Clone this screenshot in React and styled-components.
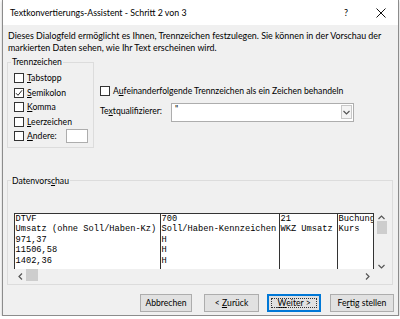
import React from 'react';
import styled, { createGlobalStyle } from 'styled-components';

const GlobalStyle = createGlobalStyle`
  body {
    margin: 0;
    background: #ffffff;
    font-family: Lato, "Noto Sans", sans-serif;
    font-size: 8.6px;
    color: #000;
  }
  * { box-sizing: border-box; }
`;

const Window = styled.div`
  margin-left: 2px;
  width: 397px;
  height: 316px;
  background: #f0f0f0;
  border: 1px solid #8c8c8c;
  border-top: none;
  box-shadow: 0 1px 3px rgba(0, 0, 0, 0.25);
  display: flex;
  flex-direction: column;
  overflow: hidden;
`;

const TitleBar = styled.div`
  height: 25px;
  flex: none;
  background: #ffffff;
  display: flex;
  align-items: center;
  padding-left: 7px;
`;

const Title = styled.div`
  flex: 1;
  font-size: 8.8px;
`;

const TitleButton = styled.div`
  width: ${p => p.$w}px;
  height: 25px;
  display: flex;
  align-items: center;
  justify-content: center;
  font-size: 9px;
`;

const Body = styled.div`
  flex: 1;
  padding: 5px 4px 0 4px;
  display: flex;
  flex-direction: column;
`;

const Intro = styled.p`
  margin: 0;
  padding-left: 1px;
  font-size: 8.9px;
  line-height: 12px;
  white-space: nowrap;
`;

const TopRow = styled.div`
  display: flex;
  margin-top: 2px;
`;

const Group = styled.fieldset`
  margin: 0;
  min-width: 0;
  width: ${p => p.$w}px;
  border: 1px solid #dcdcdc;
  padding: ${p => p.$pad};
`;

const Legend = styled.legend`
  padding: 0 1px;
  margin-left: ${p => p.$ml}px;
  line-height: 12px;
`;

const OptionRow = styled.label`
  display: flex;
  align-items: center;
  height: 14.5px;
  white-space: nowrap;
`;

const Box = styled.span`
  width: 10px;
  height: 10px;
  border: 1px solid #333;
  background: #fff;
  display: flex;
  align-items: center;
  justify-content: center;
  flex: none;
`;

const OptionText = styled.span`
  margin-left: 3px;
`;

const SmallInput = styled.span`
  width: 22px;
  height: 14px;
  border: 1px solid #adadad;
  background: #fff;
  margin-left: 9px;
`;

const RightPanel = styled.div`
  margin-left: 6px;
  padding-top: 28px;
  display: flex;
  flex-direction: column;
`;

const QualifierRow = styled.div`
  display: flex;
  align-items: center;
  margin-top: 4px;
`;

const QualifierLabel = styled.span`
  width: 71px;
  margin-top: -3px;
`;

const Select = styled.div`
  width: 183px;
  height: 19px;
  background: #fff;
  border: 1px solid #adadad;
  display: flex;
  align-items: center;
  justify-content: space-between;
  padding: 0 1px 0 3px;
`;

const SelectValue = styled.span`
  align-self: flex-start;
  line-height: 10px;
`;

const SelectArrow = styled.span`
  width: 11px;
  height: 14px;
  border: 1px solid #c8c8c8;
  background: #f4f4f4;
  display: flex;
  align-items: center;
  justify-content: center;
`;

const PreviewGroup = styled(Group)`
  margin-top: 27px;
`;

const Preview = styled.div`
  display: grid;
  grid-template-columns: 360px 14px;
  grid-template-rows: 56px 15px;
`;

const DataArea = styled.div`
  background: #fff;
  border-top: 1px solid #333;
  display: flex;
  overflow: hidden;
`;

const Column = styled.div`
  width: ${p => p.$w}px;
  flex: none;
  border-left: 1px solid #333;
  border-right: ${p => (p.$last ? '1px solid #333' : 'none')};
  font-family: "Liberation Mono", "Courier New", monospace;
  font-size: 8.7px;
  line-height: 10.6px;
  white-space: pre;
  overflow: hidden;
  padding-left: 0.5px;
`;

const VScroll = styled.div`
  display: flex;
  flex-direction: column;
  align-items: center;
  padding: 2px 0 0 1px;
`;

const VThumb = styled.div`
  width: 10px;
  height: 13px;
  background: #cdcdcd;
  margin-top: 1px;
`;

const HScroll = styled.div`
  display: flex;
  align-items: center;
  padding-left: 4px;
  height: 15px;
`;

const HThumb = styled.div`
  width: 12px;
  height: 12px;
  background: #cdcdcd;
  margin-left: 3px;
  align-self: flex-start;
`;

const Spacer = styled.div`
  flex: 1;
`;

const EndGap = styled.div`
  width: 4px;
`;

const ButtonRow = styled.div`
  display: flex;
  justify-content: flex-end;
  margin-top: 9px;
`;

const Button = styled.div`
  width: ${p => p.$w}px;
  margin-left: ${p => p.$ml}px;
  height: 18px;
  background: #e1e1e1;
  border: 1px solid ${p => (p.$default ? '#0078d7' : '#adadad')};
  box-shadow: ${p => (p.$default ? 'inset 0 0 0 1px #0078d7' : 'none')};
  display: flex;
  align-items: center;
  justify-content: center;
  white-space: pre;
  position: relative;
  &::after {
    content: '';
    display: ${p => (p.$default ? 'block' : 'none')};
    position: absolute;
    inset: 3px;
    border: 1px dotted #333;
  }
`;

const Check = () => (
  <svg width="8" height="8" viewBox="0 0 8 8">
    <path d="M1 4.2 L3 6.3 L7 1.3" fill="none" stroke="#222" strokeWidth="1" />
  </svg>
);

const Chevron = ({ dir }) => {
  const d = {
    up: 'M0.5 4 L3.5 1 L6.5 4',
    down: 'M0.5 1 L3.5 4 L6.5 1',
    left: 'M4 0.5 L1 3.5 L4 6.5',
    right: 'M1 0.5 L4 3.5 L1 6.5',
  }[dir];
  const vertical = dir === 'up' || dir === 'down';
  return (
    <svg width={vertical ? 7 : 5} height={vertical ? 5 : 7} viewBox={vertical ? '0 0 7 5' : '0 0 5 7'}>
      <path d={d} fill="none" stroke="#555" strokeWidth="1.2" />
    </svg>
  );
};

const CheckOption = ({ checked, children }) => (
  <OptionRow>
    <Box>{checked && <Check />}</Box>
    <OptionText>{children}</OptionText>
  </OptionRow>
);

const columns = [
  { w: 146, text: 'DTVF\nUmsatz (ohne Soll/Haben-Kz)\n971,37\n11506,58\n1402,36' },
  { w: 119, text: '700\nSoll/Haben-Kennzeichen\nH\nH\nH' },
  { w: 58, text: '21\nWKZ Umsatz' },
  { w: 37, text: 'Buchung\nKurs', last: true },
];

export default function App() {
  return (
    <>
      <GlobalStyle />
      <Window>
        <TitleBar>
          <Title>Textkonvertierungs-Assistent - Schritt 2 von 3</Title>
          <TitleButton $w={34}>?</TitleButton>
          <TitleButton $w={35}>
            <svg width="10" height="10" viewBox="0 0 10 10">
              <path d="M0.5 0.5 L9.5 9.5 M9.5 0.5 L0.5 9.5" stroke="#111" strokeWidth="1" />
            </svg>
          </TitleButton>
        </TitleBar>
        <Body>
          <Intro>
            Dieses Dialogfeld ermöglicht es Ihnen, Trennzeichen festzulegen. Sie können in der Vorschau der
            <br />
            markierten Daten sehen, wie Ihr Text erscheinen wird.
          </Intro>
          <TopRow>
            <Group $w={87} $pad="3px 0 3px 6px">
              <Legend $ml={-3}>Trennzeichen</Legend>
              <CheckOption><u>T</u>abstopp</CheckOption>
              <CheckOption checked><u>S</u>emikolon</CheckOption>
              <CheckOption><u>K</u>omma</CheckOption>
              <CheckOption><u>L</u>eerzeichen</CheckOption>
              <OptionRow>
                <Box />
                <OptionText><u>A</u>ndere:</OptionText>
                <SmallInput />
              </OptionRow>
            </Group>
            <RightPanel>
              <CheckOption>
                A<u>u</u>feinanderfolgende Trennzeichen als ein Zeichen behandeln
              </CheckOption>
              <QualifierRow>
                <QualifierLabel>Te<u>x</u>tqualifizierer:</QualifierLabel>
                <Select>
                  <SelectValue>"</SelectValue>
                  <SelectArrow><Chevron dir="down" /></SelectArrow>
                </Select>
              </QualifierRow>
            </RightPanel>
          </TopRow>
          <PreviewGroup $w={386} $pad="26px 4px 0 6px">
            <Legend $ml={-3}>Datenvors<u>c</u>hau</Legend>
            <Preview>
              <DataArea>
                {columns.map((c, i) => (
                  <Column key={i} $w={c.w} $last={c.last}>{c.text}</Column>
                ))}
              </DataArea>
              <VScroll>
                <Chevron dir="up" />
                <VThumb />
                <Spacer />
                <Chevron dir="down" />
              </VScroll>
              <HScroll>
                <Chevron dir="left" />
                <HThumb />
                <Spacer />
                <Chevron dir="right" />
                <EndGap />
              </HScroll>
              <div />
            </Preview>
          </PreviewGroup>
          <ButtonRow>
            <Button $w={52} $ml={0}>Abbrechen</Button>
            <Button $w={55} $ml={12}>{'< '}<u>Z</u>urück</Button>
            <Button $w={54} $ml={8} $default><u>W</u>eiter{' >'}</Button>
            <Button $w={64} $ml={9}>Fe<u>r</u>tig stellen</Button>
          </ButtonRow>
        </Body>
      </Window>
    </>
  );
}
